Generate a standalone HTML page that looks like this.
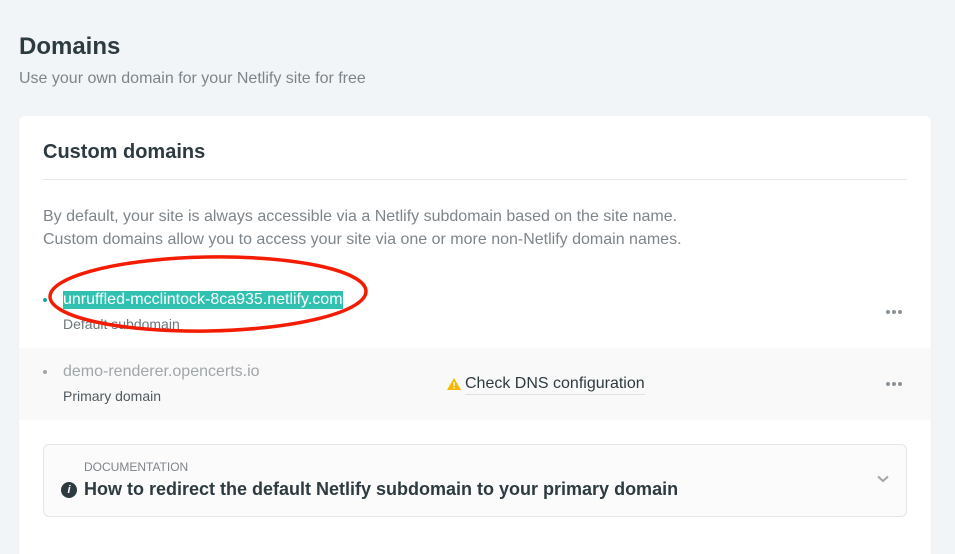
<!DOCTYPE html>
<html><head><style>
*{margin:0;padding:0;box-sizing:border-box}
html,body{width:955px;height:554px;overflow:hidden}
body{background:#f2f5f7;font-family:"Liberation Sans",sans-serif;position:relative;color:#2d3b41}
.a{position:absolute;white-space:nowrap}
.card{position:absolute;left:19px;top:116px;width:912px;height:438px;background:#fff;border-radius:6px 6px 0 0;box-shadow:0 1px 2px rgba(0,0,0,.06)}
.dots{position:absolute;width:18px;height:4px}
.dots i{display:inline-block;width:4px;height:4px;border-radius:50%;background:#8a9399;margin-right:2px;float:left}
</style></head><body>
<div class="a" style="left:19px;top:33px;font-size:24px;font-weight:bold;color:#2d3b41">Domains</div>
<div class="a" style="left:19px;top:70px;font-size:16px;color:#7d858a">Use your own domain for your Netlify site for free</div>
<div class="card">
<div class="a" style="left:24px;top:25px;font-size:20px;font-weight:bold">Custom domains</div>
<div style="position:absolute;left:24px;right:24px;top:63px;height:1px;background:#e6e9eb"></div>
<div class="a" style="left:24px;top:89px;font-size:16px;line-height:23px;color:#7d858a">By default, your site is always accessible via a Netlify subdomain based on the site name.<br>Custom domains allow you to access your site via one or more non-Netlify domain names.</div>
<div class="a" style="left:24px;top:182px;width:4px;height:4px;border-radius:50%;background:#15a6a0"></div>
<div class="a" style="left:44px;top:175px;font-size:16px;line-height:18px;background:#30c1b0;color:#fff">unruffled-mcclintock-8ca935.netlify.com</div>
<div class="a" style="left:44px;top:200px;font-size:14px;color:#6d767b">Default subdomain</div>
<div class="dots" style="left:867px;top:194px"><i></i><i></i><i></i></div>
<div style="position:absolute;left:0;right:0;top:232px;height:72px;background:#f9f9f9"></div>
<div class="a" style="left:24px;top:254px;width:4px;height:4px;border-radius:50%;background:#a0a6aa"></div>
<div class="a" style="left:44px;top:247px;font-size:16px;color:#a0a6aa">demo-renderer.opencerts.io</div>
<div class="a" style="left:44px;top:272px;font-size:14px;color:#4f5a60">Primary domain</div>
<svg class="a" style="left:428px;top:262px" width="14" height="12" viewBox="0 0 14 12"><path d="M7 0L14 12H0Z" fill="#f5b800"/><rect x="6.3" y="4" width="1.4" height="4" fill="#fff"/><rect x="6.3" y="9" width="1.4" height="1.4" fill="#fff"/></svg>
<div class="a" style="left:446px;top:259px;font-size:16px;color:#2d3b41;border-bottom:1px solid #dfe3e6;padding-bottom:1px">Check DNS configuration</div>
<div class="dots" style="left:867px;top:266px"><i></i><i></i><i></i></div>
<div style="position:absolute;left:24px;top:328px;width:864px;height:73px;border:1px solid #e3e6e8;border-radius:6px;background:#fbfbfb"></div>
<div class="a" style="left:65px;top:344px;font-size:12px;color:#7d858a">DOCUMENTATION</div>
<div class="a" style="left:42px;top:366px;width:16px;height:16px;border-radius:50%;background:#2d3b41;color:#fff;font-size:11px;font-weight:bold;text-align:center;line-height:16px;font-style:italic">i</div>
<div class="a" style="left:65px;top:363px;font-size:18px;font-weight:bold">How to redirect the default Netlify subdomain to your primary domain</div>
<svg class="a" style="left:858px;top:359px" width="12" height="8" viewBox="0 0 12 8"><path d="M1 1.5L6 6L11 1.5" stroke="#a0a6aa" stroke-width="2" fill="none"/></svg>
</div>
<svg class="a" style="left:0;top:0" width="955" height="554"><ellipse cx="208" cy="294" rx="158" ry="37" fill="none" stroke="#f31c00" stroke-width="3.5" transform="rotate(-1 208 294)"/></svg>
</body></html>
